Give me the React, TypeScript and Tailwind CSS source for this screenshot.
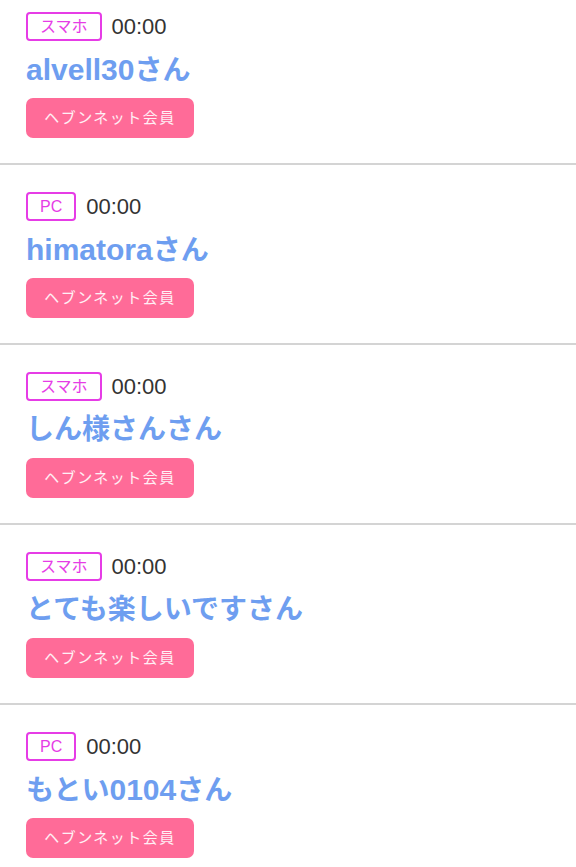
const ITEMS = [
  { device: 'スマホ', time: '00:00', name: 'alvell30さん' },
  { device: 'PC', time: '00:00', name: 'himatoraさん' },
  { device: 'スマホ', time: '00:00', name: 'しん様さんさん' },
  { device: 'スマホ', time: '00:00', name: 'とても楽しいですさん' },
  { device: 'PC', time: '00:00', name: 'もとい0104さん' },
]

const font = { fontFamily: '"Liberation Sans", "Noto Sans CJK JP", sans-serif' }

// latin runs are drawn a touch larger so they match the kana width
function Name({ text }: { text: string }) {
  const runs = text.match(/[\x00-\x7f]+|[^\x00-\x7f]+/g) ?? []
  return (
    <div className="my-[8px] flex h-[41px] items-center font-bold leading-none text-[#6e9ef0]">
      <div className="flex items-baseline">
        {runs.map((r, i) => (
          <span key={i} className={/^[\x00-\x7f]/.test(r) ? 'text-[30px]' : 'text-[28px]'}>
            {r}
          </span>
        ))}
      </div>
    </div>
  )
}

export default function App() {
  return (
    <div className="min-h-screen bg-white" style={font}>
      <ul>
        {ITEMS.map((item, i) => (
          <li
            key={i}
            className={
              'border-b-2 border-[#d4d4d4] pl-[26px] pb-[25px] ' +
              (i === 0 ? 'pt-[12px]' : 'pt-[27px]')
            }
          >
            <div className="flex items-center gap-[10px]">
              <span className="flex h-[29px] items-center rounded-[4px] border-2 border-[#e63ce6] px-[12px] text-[16px] leading-none text-[#e63ce6]">
                {item.device}
              </span>
              <span className="text-[22px] leading-none text-[#333333]">{item.time}</span>
            </div>
            <Name text={item.name} />
            <button className="flex h-[40px] w-[168px] items-center justify-center rounded-[7px] bg-[#ff6b98] text-[15px] tracking-[1.5px] text-white/90">
              ヘブンネット会員
            </button>
          </li>
        ))}
      </ul>
    </div>
  )
}
